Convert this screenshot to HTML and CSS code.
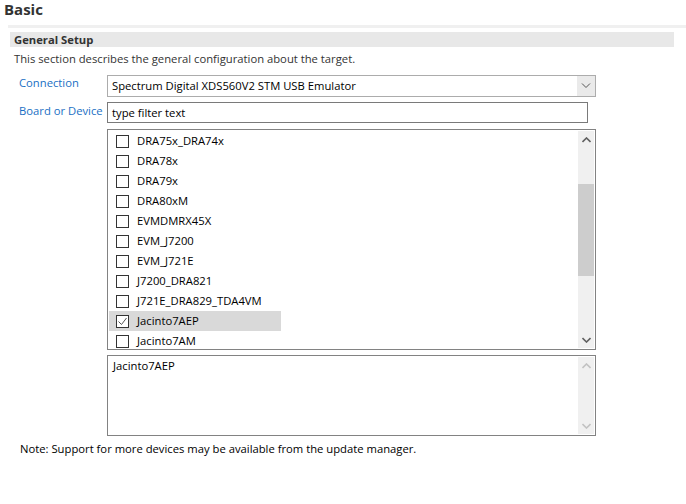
FILE: index.html
```html
<!DOCTYPE html>
<html>
<head>
<meta charset="utf-8">
<link rel="stylesheet" href="styles.css">
</head>
<body>
<div class="page">
  <div class="title">Basic</div>
  <div class="rule"></div>
  <div class="section-head">General Setup</div>
  <div class="desc">This section describes the general configuration about the target.</div>
  <div class="form">
    <div class="label lab-conn">Connection</div>
    <div class="select">
      <span class="select-text">Spectrum Digital XDS560V2 STM USB Emulator</span>
      <span class="select-btn"><svg width="10" height="6" viewBox="0 0 10 6"><path d="M1 0.5 L5 4.5 L9 0.5" fill="none" stroke="#555" stroke-width="1"/></svg></span>
    </div>
    <div class="label lab-board">Board or Device</div>
    <div class="filter">type filter text</div>
    <div></div>
    <div class="list">
      <div class="rows">
        <div class="row"><span class="cb"></span><span>DRA75x_DRA74x</span></div>
        <div class="row"><span class="cb"></span><span>DRA78x</span></div>
        <div class="row"><span class="cb"></span><span>DRA79x</span></div>
        <div class="row"><span class="cb"></span><span>DRA80xM</span></div>
        <div class="row"><span class="cb"></span><span>EVMDMRX45X</span></div>
        <div class="row"><span class="cb"></span><span>EVM_J7200</span></div>
        <div class="row"><span class="cb"></span><span>EVM_J721E</span></div>
        <div class="row"><span class="cb"></span><span>J7200_DRA821</span></div>
        <div class="row"><span class="cb"></span><span>J721E_DRA829_TDA4VM</span></div>
        <div class="row sel"><span class="cb checked"><svg width="11" height="11" viewBox="0 0 11 11"><path d="M1.5 5.5 L4.5 8.5 L9.5 2" fill="none" stroke="#555" stroke-width="1"/></svg></span><span>Jacinto7AEP</span></div>
        <div class="row"><span class="cb"></span><span>Jacinto7AM</span></div>
      </div>
      <div class="sbar">
        <span class="arr"><svg width="9" height="6" viewBox="0 0 9 6"><path d="M0.5 5 L4.5 1 L8.5 5" fill="none" stroke="#606060" stroke-width="1.6"/></svg></span>
        <div class="track"><div class="thumb"></div></div>
        <span class="arr"><svg width="9" height="6" viewBox="0 0 9 6"><path d="M0.5 1 L4.5 5 L8.5 1" fill="none" stroke="#606060" stroke-width="1.6"/></svg></span>
      </div>
    </div>
    <div></div>
    <div class="textarea">
      <div class="ta-text">Jacinto7AEP</div>
      <div class="sbar dis">
        <span class="arr"><svg width="9" height="6" viewBox="0 0 9 6"><path d="M0.5 5 L4.5 1 L8.5 5" fill="none" stroke="#c2c2c2" stroke-width="1.6"/></svg></span>
        <div class="track"></div>
        <span class="arr"><svg width="9" height="6" viewBox="0 0 9 6"><path d="M0.5 1 L4.5 5 L8.5 1" fill="none" stroke="#c2c2c2" stroke-width="1.6"/></svg></span>
      </div>
    </div>
  </div>
  <div class="note">Note: Support for more devices may be available from the update manager.</div>
</div>
</body>
</html>
```

FILE: styles.css
```css
html, body {
  margin: 0;
  padding: 0;
  background: #ffffff;
}
.page {
  width: 686px;
  height: 504px;
  font-family: "Open Sans", "Noto Sans", sans-serif;
  font-size: 11.25px;
  color: #000;
  overflow: hidden;
}
.title {
  font-weight: bold;
  font-size: 15px;
  color: #333;
  padding-left: 4px;
  height: 25px;
  line-height: 18px;
}
.rule {
  margin-left: 8px;
  height: 3px;
  background: #f0f0f0;
}
.section-head {
  margin: 4px 12px 0 10px;
  height: 15px;
  line-height: 15px;
  background: #e8e8e8;
  font-weight: bold;
  color: #333;
  padding-left: 4px;
}
.desc {
  padding-left: 14px;
  margin-top: 5px;
  height: 17px;
  line-height: 14px;
  color: #333;
}
.form {
  display: grid;
  grid-template-columns: 107px 489px;
  row-gap: 5px;
  margin-top: 6px;
}
.label {
  color: #1a6fc4;
  padding-left: 19px;
  line-height: 14px;
  padding-top: 1px;
}
.lab-board { padding-top: 2px; }
.select {
  height: 22px;
  box-sizing: border-box;
  border: 1px solid #acacac;
  background: #fff;
  display: flex;
  align-items: stretch;
}
.select-text {
  flex: 1;
  padding-left: 4px;
  line-height: 20px;
}
.select-btn {
  width: 18px;
  background: #eaeaea;
  display: flex;
  align-items: center;
  justify-content: center;
}
.filter {
  width: 481px;
  height: 21px;
  box-sizing: border-box;
  border: 1px solid #7a7a7a;
  padding-left: 4px;
  line-height: 19px;
}
.list {
  height: 221px;
  box-sizing: border-box;
  border: 1px solid #828282;
  display: flex;
  overflow: hidden;
  margin-top: 1px;
}
.rows {
  flex: 1;
  padding-left: 1px;
  padding-top: 1px;
  overflow: hidden;
}
.row {
  height: 20px;
  width: 172px;
  display: flex;
  align-items: center;
  gap: 8px;
  padding-left: 7px;
  box-sizing: border-box;
  line-height: 20px;
}
.row.sel { background: #d9d9d9; }
.cb {
  width: 13px;
  height: 13px;
  box-sizing: border-box;
  border: 1px solid #333;
  background: #fff;
  flex: none;
  display: flex;
  align-items: center;
  justify-content: center;
}
.cb svg { display: block; }
.sbar {
  width: 16px;
  margin: 1px 1px 1px 0;
  background: #f0f0f0;
  display: flex;
  flex-direction: column;
  align-items: center;
}
.arr {
  height: 17px;
  display: flex;
  align-items: center;
  justify-content: center;
}
.track {
  flex: 1;
  width: 100%;
  padding-top: 36px;
  box-sizing: border-box;
}
.thumb {
  height: 92px;
  background: #cdcdcd;
}
.textarea {
  height: 81px;
  box-sizing: border-box;
  border: 1px solid #828282;
  display: flex;
}
.ta-text {
  flex: 1;
  padding-left: 5px;
  padding-top: 3px;
  line-height: 14px;
}
.note {
  padding-left: 20px;
  margin-top: 6px;
  line-height: 14px;
}
```
